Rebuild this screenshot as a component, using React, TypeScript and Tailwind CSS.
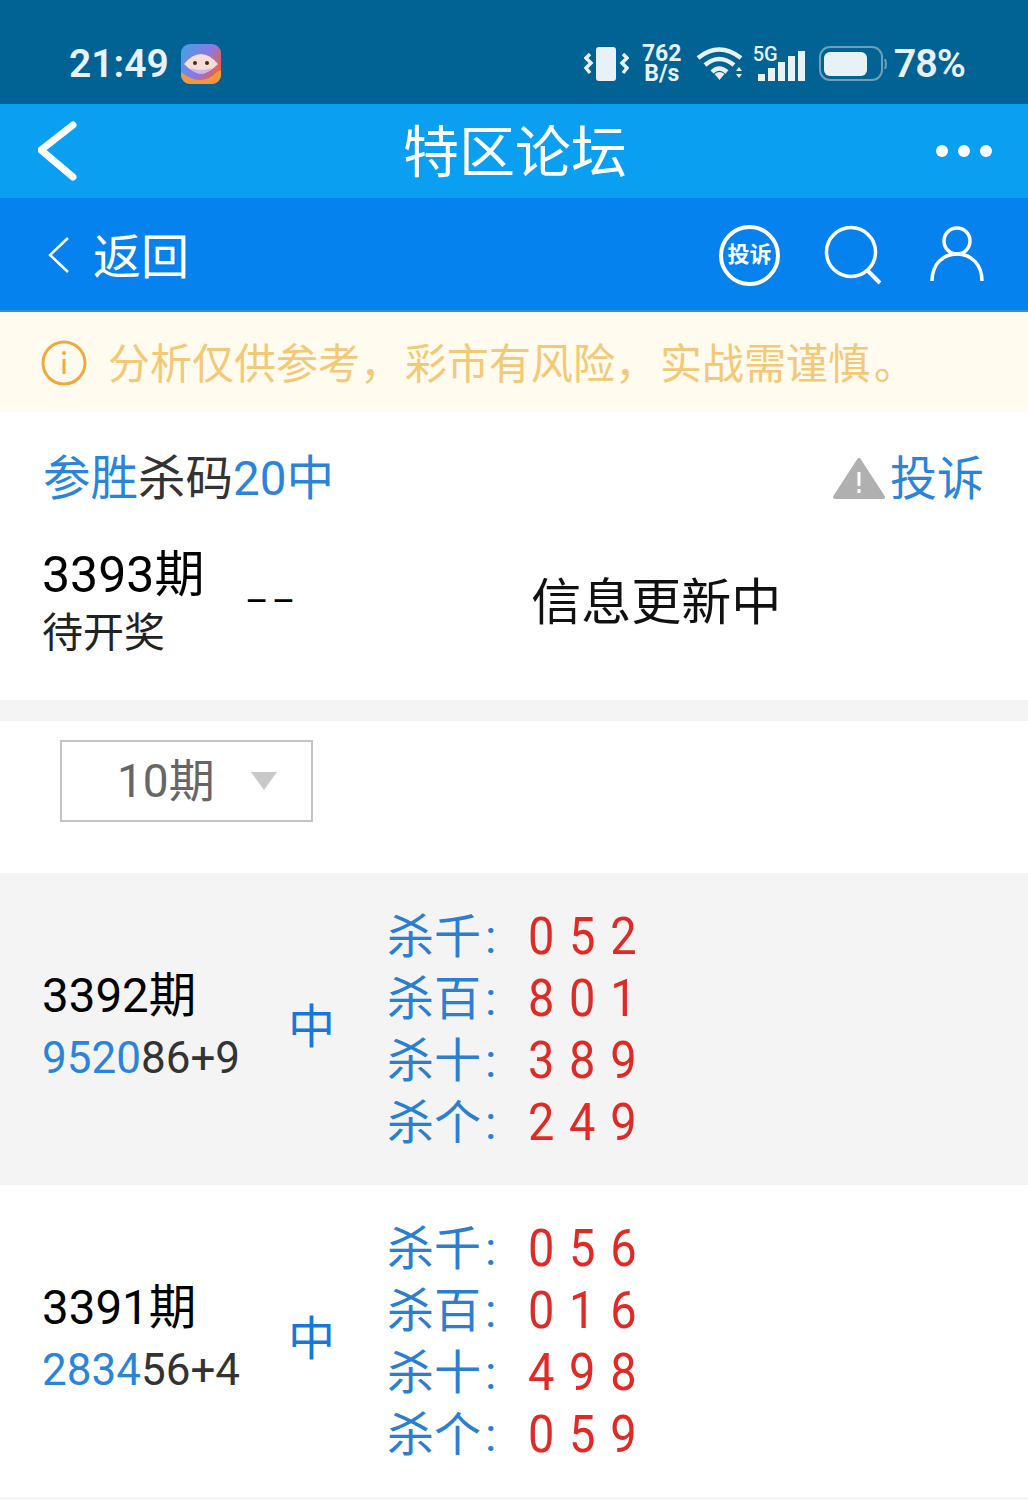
import React from 'react'

const rows = [
  {
    issue: '3392期',
    hit: '9520',
    rest: '86+9',
    bg: 'bg-[#f4f4f4]',
    kills: [
      ['杀千', '0 5 2'],
      ['杀百', '8 0 1'],
      ['杀十', '3 8 9'],
      ['杀个', '2 4 9']
    ]
  },
  {
    issue: '3391期',
    hit: '2834',
    rest: '56+4',
    bg: 'bg-white',
    kills: [
      ['杀千', '0 5 6'],
      ['杀百', '0 1 6'],
      ['杀十', '4 9 8'],
      ['杀个', '0 5 9']
    ]
  }
]

const StatusBar = () => (
  <div className="h-[104px] bg-[#006394] flex items-center pt-[24px] pl-[69px] pr-[63px] text-[#e8f1f6]">
    <span className="text-[39px] leading-[48px] font-semibold">21:49</span>
    <svg className="ml-[12px]" width="40" height="40" viewBox="0 0 40 40">
      <defs>
        <linearGradient id="appbg" x1="0" y1="0" x2="1" y2="0.6">
          <stop offset="0" stopColor="#3fa6e0" />
          <stop offset="0.6" stopColor="#8a78e6" />
          <stop offset="1" stopColor="#ee5f45" />
        </linearGradient>
      </defs>
      <rect width="40" height="40" rx="9" fill="url(#appbg)" />
      <path d="M0 28 Q20 44 36 28 L40 26 V31 A9 9 0 0 1 31 40 H9 A9 9 0 0 1 0 31 Z" fill="#f4973c" />
      <path d="M3 20 Q20 0 37 20 Q20 38 3 20 Z" fill="#f8dcd6" />
      <path d="M9 24 Q20 36 31 24 Q20 28 9 24 Z" fill="#c9b7ee" />
      <circle cx="14" cy="19" r="2" fill="#3a2a2a" />
      <circle cx="26" cy="19" r="2" fill="#3a2a2a" />
    </svg>
    <div className="ml-auto flex items-center">
      <svg width="45" height="36" viewBox="0 0 45 36" fill="none">
        <rect x="12" y="1" width="20" height="34" rx="3" fill="#e8f1f6" />
        <path d="M6 8 L2 12 L7 17 L2 22 L6 27" stroke="#e8f1f6" strokeWidth="3.5" />
        <path d="M39 8 L43 12 L38 17 L43 22 L39 27" stroke="#e8f1f6" strokeWidth="3.5" />
      </svg>
      <div className="ml-[13px] w-[40px] flex flex-col items-center text-[23px] leading-[20px] font-bold">
        <span>762</span>
        <span>B/s</span>
      </div>
      <svg className="ml-[14px]" width="48" height="34" viewBox="0 0 48 34" fill="none">
        <path d="M2 11 Q23 -6 45 11" stroke="#e8f1f6" strokeWidth="4.5" />
        <path d="M9 18 Q23 6 38 18" stroke="#e8f1f6" strokeWidth="4.5" />
        <path d="M16 25 Q23 18 31 25" stroke="#e8f1f6" strokeWidth="4.5" />
        <path d="M18.5 27 L23.5 33 L28.5 27 Q23.5 23 18.5 27 Z" fill="#e8f1f6" />
        <path d="M40 24 L43 20 L46 24 Z M40 27 L43 31 L46 27 Z" fill="#e8f1f6" />
      </svg>
      <div className="relative ml-[14px] w-[49px] h-[34px] flex items-end gap-[3px]">
        <span className="absolute left-[-5px] top-[-1px] text-[20px] leading-[17px] font-medium">5G</span>
        <div className="w-[7px] h-[7px] bg-[#e8f1f6]" />
        <div className="w-[7px] h-[13px] bg-[#e8f1f6]" />
        <div className="w-[7px] h-[19px] bg-[#e8f1f6]" />
        <div className="w-[7px] h-[25px] bg-[#e8f1f6]" />
        <div className="w-[7px] h-[30px] bg-[#e8f1f6]" />
      </div>
      <svg className="ml-[12px]" width="70" height="36" viewBox="0 0 70 36" fill="none">
        <rect x="1" y="1" width="62" height="33" rx="10" stroke="#6f9fbb" strokeWidth="2" />
        <rect x="5" y="6" width="43" height="24" rx="6" fill="#e8f1f6" />
        <path d="M66 13 Q68 18 66 23" stroke="#6f9fbb" strokeWidth="2" />
      </svg>
      <span className="ml-[5px] text-[39.5px] leading-[48px] font-semibold tracking-[-1px]">78%</span>
    </div>
  </div>
)

const NavBar = () => (
  <div className="h-[94px] bg-[#0a9ff0] flex items-center justify-between pl-[38px] pr-[36px] text-white">
    <div className="w-[56px]">
      <svg width="40" height="62" viewBox="0 0 40 62" fill="none">
        <path d="M35 5 L3 30 L35 57" stroke="white" strokeWidth="7" strokeLinecap="round" strokeLinejoin="round" />
      </svg>
    </div>
    <span className="mt-[3px] text-[56px] leading-[64px]">特区论坛</span>
    <div className="flex gap-[10px]">
      <div className="w-[12px] h-[12px] rounded-full bg-white" />
      <div className="w-[12px] h-[12px] rounded-full bg-white" />
      <div className="w-[12px] h-[12px] rounded-full bg-white" />
    </div>
  </div>
)

const SubBar = () => (
  <div className="h-[114px] bg-[#0582ee] border-b-2 border-[#2f8fd8] flex items-center pt-[2px] pl-[47px] pr-[44px] text-white">
    <svg width="24" height="38" viewBox="0 0 24 38" fill="none">
      <path d="M21 2 L3 19 L21 36" stroke="white" strokeWidth="2.5" />
    </svg>
    <span className="ml-[22px] mt-[6px] text-[48px] leading-[56px]">返回</span>
    <div className="ml-auto w-[61px] h-[61px] rounded-full border-[4px] border-white flex items-center justify-center text-[22px] font-bold leading-none whitespace-nowrap">
      投诉
    </div>
    <svg className="ml-[44px]" width="58" height="60" viewBox="0 0 58 60" fill="none">
      <circle cx="27" cy="27" r="24.5" stroke="white" strokeWidth="3.5" />
      <path d="M43 45 L56 58" stroke="white" strokeWidth="4" />
    </svg>
    <svg className="ml-[48px]" width="54" height="58" viewBox="0 0 54 58" fill="none">
      <circle cx="27" cy="15" r="13" stroke="white" strokeWidth="3.5" />
      <path d="M2 55 C2 38 13 28 27 28 C41 28 52 38 52 55" stroke="white" strokeWidth="3.5" />
    </svg>
  </div>
)

const Notice = () => (
  <div className="h-[100px] bg-[#fffbee] flex items-center pl-[41px]">
    <svg className="mt-[2px]" width="46" height="46" viewBox="0 0 46 46" fill="none">
      <circle cx="23" cy="23" r="21" stroke="#f0a93e" strokeWidth="3" />
      <circle cx="23" cy="13" r="2" fill="#f0a93e" />
      <rect x="21.5" y="19" width="3" height="15" fill="#f0a93e" />
    </svg>
    <span className="ml-[21px] mt-[6px] text-[42px] leading-[50px] text-[#f3c978] whitespace-nowrap">
      分析仅供参考<span className="mr-[3px]">，</span>彩市有风险<span className="mr-[3px]">，</span>实战需谨慎<span className="ml-[4px]">。</span>
    </span>
  </div>
)

const Summary = () => (
  <div className="h-[288px] bg-white pl-[43px] pr-[44px] pt-[38px]">
    <div className="flex items-center h-[58px]">
      <span className="text-[47.5px] leading-[58px] text-[#2a85da]">
        参胜<span className="text-[#333333]">杀码</span>20中
      </span>
      <svg className="ml-auto" width="52" height="44" viewBox="0 0 52 44">
        <path d="M26 3 L50 40 H2 Z" fill="#b0b0b0" stroke="#b0b0b0" strokeWidth="4" strokeLinejoin="round" />
        <rect x="24.5" y="15" width="3" height="14" fill="white" />
        <rect x="24.5" y="32" width="3" height="4" fill="white" />
      </svg>
      <span className="ml-[5px] text-[47px] leading-[58px] text-[#2a85da]">投诉</span>
    </div>
    <div className="flex items-center mt-[36px] -ml-[1px]">
      <div className="w-[203px] text-black">
        <div className="text-[50px] leading-[62px]">3393期</div>
        <div className="text-[41px] leading-[54px] text-[#222222]">待开奖</div>
      </div>
      <span className="text-[36px] leading-[40px] tracking-[3px]">––</span>
      <span className="ml-[233px] mt-[2px] text-[50px] leading-[60px] text-[#111111]">信息更新中</span>
    </div>
  </div>
)

const PeriodSelect = () => (
  <div className="h-[152px] bg-white pl-[60px] pt-[19px]">
    <div className="w-[253px] h-[82px] border-2 border-[#c4c4c4] flex items-center pl-[55px]">
      <span className="text-[46px] leading-[56px] text-[#666666]">10期</span>
      <svg width="28" height="20" viewBox="0 0 28 20" className="ml-[35px]">
        <path d="M1 1 H27 L14 19 Z" fill="#c9c9c9" />
      </svg>
    </div>
  </div>
)

const Row = ({ row }: { row: (typeof rows)[number] }) => (
  <div className={`${row.bg} h-[312px] flex items-center pl-[42px]`}>
    <div className="w-[246px] mb-[5px]">
      <div className="text-[47.5px] leading-[62px] text-black">{row.issue}</div>
      <div className="text-[44px] leading-[62px] text-[#333333]">
        <span className="text-[#2a85da]">{row.hit}</span>
        {row.rest}
      </div>
    </div>
    <div className="w-[99px] mb-[4px] text-[47px] leading-[62px] text-[#1478dc]">中</div>
    <div className="mt-[2px]">
      {row.kills.map(([label, nums]) => (
        <div key={label} className="flex h-[62px] items-center text-[47px] leading-[62px]">
          <span className="w-[141px] text-[#2a7fd0]">
            {label}
            <span className="ml-[4px]">:</span>
          </span>
          <span className="inline-block mb-[2px] scale-y-110 text-[47px] text-[#e02a26] [word-spacing:3px]">{nums}</span>
        </div>
      ))}
    </div>
  </div>
)

export default function App() {
  return (
    <div className="w-[1028px] h-[1500px] overflow-hidden bg-white font-['Roboto','Noto_Sans_CJK_SC',sans-serif]">
      <StatusBar />
      <NavBar />
      <SubBar />
      <Notice />
      <Summary />
      <div className="h-[21px] bg-[#f4f4f4]" />
      <PeriodSelect />
      {rows.map(row => (
        <Row key={row.issue} row={row} />
      ))}
      <div className="h-[3px] bg-[#f4f4f4]" />
    </div>
  )
}
